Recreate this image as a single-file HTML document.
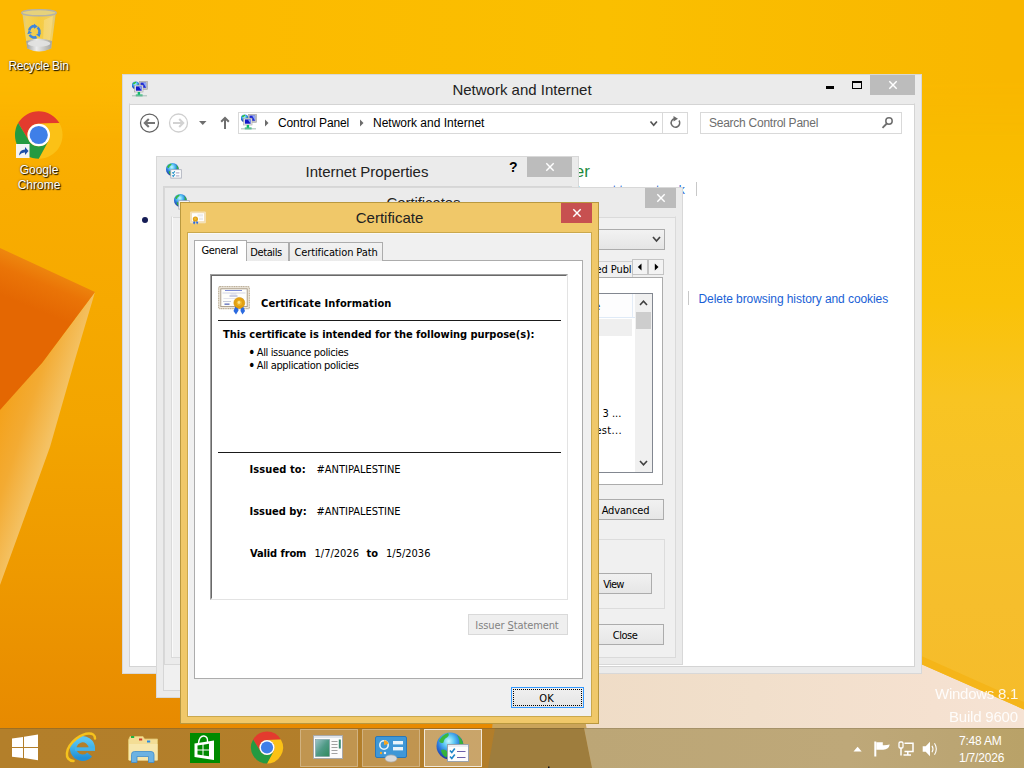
<!DOCTYPE html>
<html>
<head>
<meta charset="utf-8">
<title>Certificate</title>
<style>
*{box-sizing:border-box;margin:0;padding:0}
html,body{width:1024px;height:768px;overflow:hidden}
body{position:relative;font-family:"Liberation Sans",sans-serif;font-size:12px;color:#000;background:#fbb409}
.abs{position:absolute}
.t{position:absolute;white-space:nowrap;line-height:1}
#wall{position:absolute;left:0;top:0;width:1024px;height:768px}
.win{position:absolute;background:#ebebeb;border:1px solid #d8d8d8}
.win .ttl{position:absolute;left:0;right:0;top:5px;height:20px;text-align:center;font-size:15px;line-height:20px;color:#222;white-space:nowrap}
.cls{position:absolute;top:0;height:20px;background:#bcbcbc}
.cls svg{position:absolute;left:50%;top:50%;margin:-4px 0 0 -4px}
.dl{font-size:12px;color:#fff;text-align:center;text-shadow:1px 1px 1px rgba(0,0,0,0.95),0 0 2px rgba(0,0,0,0.55)}
.dj{font-family:"DejaVu Sans Condensed","Liberation Sans",sans-serif;font-size:11px}
.b{font-weight:bold}
.pb{position:absolute;border:1px solid #acacac;background:linear-gradient(#f1f1f1,#e6e6e6);text-align:center;white-space:nowrap;font-family:"DejaVu Sans Condensed","Liberation Sans",sans-serif;font-size:11px}
.btn{position:absolute;border:1px solid #acacac;background:linear-gradient(#f0f0f0,#e5e5e5);font-size:11px;text-align:center}
</style>
</head>
<body>
<svg width="0" height="0" style="position:absolute">
<defs>
<radialGradient id="gl2" cx="0.4" cy="0.35" r="0.7"><stop offset="0" stop-color="#8fdcf8"/><stop offset="0.5" stop-color="#2c82d2"/><stop offset="1" stop-color="#173f8c"/></radialGradient>
<radialGradient id="gl3" cx="0.45" cy="0.32" r="0.7"><stop offset="0" stop-color="#c8f8ff"/><stop offset="0.3" stop-color="#5cc8f4"/><stop offset="0.6" stop-color="#2a78dc"/><stop offset="1" stop-color="#1c2c98"/></radialGradient>
<symbol id="icoNet" viewBox="0 0 16 16">
<circle cx="3.600" cy="4.300" r="3.800" fill="url(#gl3)"/><path d="M0.800 2.500 q1.500-2 3.500-1.800 q0 1.500-1.500 2 q-1 1-2 -0.200z M5.500 3.500 q1.500-0.500 1.800 1 q-0.800 1.500-2 0.500z" fill="#35c030"/>
<rect x="7.500" y="0.300" width="8" height="8" fill="#c4c4c4" stroke="#a2a2a2" stroke-width="0.600"/><rect x="8.600" y="1.600" width="5.500" height="5.200" fill="#1f2ad6"/><path d="M11 1.600 h3.100 v5.200z" fill="#8fa8f4"/>
<rect x="2.500" y="4.200" width="8.500" height="6.800" fill="#ececec" stroke="#a4a4a4" stroke-width="0.600"/><rect x="3.900" y="5.400" width="5.800" height="4.300" fill="#1418c8"/><path d="M6.800 5.400 h2.900 v4.300z" fill="#8aa2f2"/>
<rect x="5.700" y="11" width="2.400" height="2.800" fill="#12b868"/><rect x="3.800" y="13.500" width="6.800" height="1.900" fill="#12b868"/><rect x="0" y="14.200" width="15" height="0.600" fill="#9ab8b0"/><rect x="0" y="15.600" width="15" height="0.500" fill="#b8c4c0"/>
</symbol>
<symbol id="icoInet" viewBox="0 0 16 16">
<circle cx="6.400" cy="6.400" r="6.400" fill="url(#gl3)"/>
<path d="M1.200 3.500 q1.500-2.500 4-3 q1 0.800-0.500 2 q-1.500 0.500-1.800 2.500 q-1.200 0.500-1.700-1.500z M10 1.800 q2 1.200 2.700 3.700 q-1 1-2 0.300 q0.500-1.800-0.700-4z M2.500 8.500 q1.800-0.800 2.800 0.700 q0.500 1.800-0.500 2.800 q-2-1.200-2.300-3.500z" fill="#35b82e" opacity="0.9"/>
<rect x="4.800" y="6.700" width="10.500" height="8.400" fill="#fdfdfd" stroke="#a4a8b6" stroke-width="0.800"/>
<path d="M6.300 9.300 l1 1.100 l1.500-2.200 M6.300 12.300 l1 1.100 l1.500-2.200" fill="none" stroke="#2390c8" stroke-width="1.100"/><path d="M9.800 9.900h3.600M9.800 12.900h3.600" stroke="#8a86b0" stroke-width="0.800"/>
</symbol>
<symbol id="icoCert" viewBox="0 0 16 16">
<rect x="0.300" y="2.900" width="15.400" height="11" rx="0.600" fill="#f3dcae" stroke="#f6e6c4" stroke-width="0.700"/>
<rect x="1.900" y="4.200" width="12.200" height="8" fill="#fefefe"/>
<rect x="7.500" y="5.200" width="5.500" height="2.300" fill="#ebebeb"/><rect x="9" y="8.700" width="4" height="2.300" fill="#ececec"/>
<path d="M4 11.500 l-1 2.500 l1.200 1.500 l1.300-2.200z" fill="#2a6ae0"/><path d="M6.500 11.800 l-0.300 2 l1 1.700 l1.100-2.300z" fill="#2a6ae0"/>
<circle cx="5.400" cy="10" r="2.600" fill="#dfa010"/><circle cx="5.300" cy="9.800" r="1.300" fill="#eeb838"/>
</symbol>
<symbol id="xg" viewBox="0 0 10 10"><path d="M1.300 1.300L8.700 8.700M8.700 1.300L1.300 8.700" stroke="#fff" stroke-width="1.450" fill="none"/></symbol>
</defs></svg>
<!-- WALLPAPER -->
<svg id="wall" viewBox="0 0 1024 768">
<defs>
<linearGradient id="gTop" x1="0" y1="0" x2="1" y2="0"><stop offset="0.08" stop-color="#fdb800"/><stop offset="0.59" stop-color="#fabf00"/><stop offset="0.98" stop-color="#f9b700"/></linearGradient>
<linearGradient id="gL" x1="0" y1="0" x2="0" y2="1"><stop offset="0" stop-color="#fdb800"/><stop offset="0.24" stop-color="#f9ad00"/><stop offset="0.55" stop-color="#f3a500"/><stop offset="0.75" stop-color="#ee9900"/><stop offset="0.96" stop-color="#e78900"/></linearGradient>
<linearGradient id="gR" x1="0" y1="0" x2="0" y2="1"><stop offset="0" stop-color="#f9b800"/><stop offset="0.14" stop-color="#f9bd00"/><stop offset="0.343" stop-color="#fac208"/><stop offset="0.48" stop-color="#f8c422"/><stop offset="0.62" stop-color="#f6c229"/><stop offset="0.767" stop-color="#f6be2c"/><stop offset="1" stop-color="#f5bb2a"/></linearGradient>
<linearGradient id="gCream" x1="0" y1="0" x2="1" y2="0"><stop offset="0" stop-color="#efdcc6"/><stop offset="0.4" stop-color="#f1dfcb"/><stop offset="0.8" stop-color="#f5e1d0"/><stop offset="1" stop-color="#f6e3d4"/></linearGradient>
<linearGradient id="gSliver" gradientUnits="userSpaceOnUse" x1="0" y1="403" x2="56" y2="421.3"><stop offset="0" stop-color="#f4a11a"/><stop offset="0.5" stop-color="#f3ab33"/><stop offset="1" stop-color="#f4c264"/></linearGradient>
<linearGradient id="gFacet" gradientUnits="userSpaceOnUse" x1="60" y1="268" x2="42" y2="312"><stop offset="0" stop-color="#ef8c10"/><stop offset="0.45" stop-color="#ea7407"/><stop offset="1" stop-color="#e46702"/></linearGradient>
<linearGradient id="gFade" x1="0" y1="0" x2="0" y2="1"><stop offset="0.57" stop-color="#fff"/><stop offset="1" stop-color="#000"/></linearGradient>
<mask id="mTop"><rect x="0" y="0" width="1024" height="140" fill="url(#gFade)"/></mask>
</defs>
<rect x="0" y="0" width="1024" height="768" fill="url(#gL)"/>
<rect x="900" y="60" width="124" height="708" fill="url(#gR)"/>
<rect x="0" y="0" width="1024" height="140" fill="url(#gTop)" mask="url(#mTop)"/>
<!-- left facets -->
<polygon points="0,405 42,363 95,292 74,363 50,447 20,530 0,585" fill="url(#gSliver)"/>
<polygon points="0,248 95,292 42,363 0,410" fill="url(#gFacet)"/>
<polygon points="495,700 583,700 592,768 488,768" fill="#caa45a"/>
<!-- cream floor + ribbon edge -->
<polygon points="592,768 575,646 880,646 1024,709.5 1024,768" fill="url(#gCream)"/>
<polygon points="880,637.4 1024,702 1024,709.5 880,646" fill="#f5b519"/>
</svg>

<!-- DESKTOP ICONS -->
<svg class="abs" style="left:0;top:0" width="130" height="200" viewBox="0 0 130 200">
<defs>
<linearGradient id="binG" x1="0" y1="0" x2="1" y2="0"><stop offset="0" stop-color="#cfc79c" stop-opacity="0.9"/><stop offset="0.12" stop-color="#efd878" stop-opacity="0.8"/><stop offset="0.5" stop-color="#f3d45a" stop-opacity="0.7"/><stop offset="0.88" stop-color="#efd67a" stop-opacity="0.8"/><stop offset="1" stop-color="#c9c3a0" stop-opacity="0.9"/></linearGradient>
<linearGradient id="binB" x1="0" y1="0" x2="1" y2="0"><stop offset="0" stop-color="#9b9b98"/><stop offset="0.4" stop-color="#ececec"/><stop offset="1" stop-color="#a5a39a"/></linearGradient>
</defs>
<!-- recycle bin -->
<path d="M22.300 13 L27.200 48.500 Q39 54 51.200 48.500 L55.800 13 Q39 19.500 22.300 13z" fill="url(#binG)"/>
<path d="M44 20 L53 16 L50 40 L43 42z" fill="#fff" opacity="0.180"/>
<path d="M26.200 41 Q39 36 52 41 L51.200 48.500 Q39 54.500 27.200 48.500z" fill="url(#binB)"/>
<ellipse cx="39" cy="43.500" rx="11.300" ry="3.300" fill="#e2e2e0" opacity="0.950"/>
<ellipse cx="39" cy="12.700" rx="17.300" ry="3.100" fill="#e6d27c" stroke="#b4b2a8" stroke-width="1.400"/>
<g fill="none" stroke="#3f86dc" stroke-width="2.600">
<path d="M29.300 30.500 a5 5 0 0 1 5.500 -4.300"/><path d="M37.500 27.500 a5 5 0 0 1 1.200 6.500"/><path d="M36.500 37 a5 5 0 0 1 -6.800 -2.300"/>
</g>
<g fill="#3f86dc"><path d="M34 23.800 l3.800 2.600 l-3.800 2.400z M40.800 33 l-1.200 4 l-3.500-2.500z M27.300 34.300 l1.500-4 l3.300 2.800z"/></g>
<!-- chrome -->
<g transform="translate(38.750 135)">
<path d="M-20.61 -11.90 A23.8 23.8 0 0 1 20.61 -11.90 L0 -11.3 A11.3 11.3 0 0 0 -9.79 5.65z" fill="#e33b2e"/><path d="M20.61 -11.90 A23.8 23.8 0 0 1 0.00 23.80 L9.79 5.65 A11.3 11.3 0 0 0 0 -11.3z" fill="#fbc116"/><path d="M0.00 23.80 A23.8 23.8 0 0 1 -20.61 -11.90 L-9.79 5.65 A11.3 11.3 0 0 0 9.79 5.65z" fill="#249a41"/><circle r="11.3" fill="#fff"/><circle r="9.1" fill="#3f7fe8"/>
</g>
<rect x="16" y="144" width="13.500" height="14" fill="#f4f4f4"/>
<path d="M19 155.500 q0.500-6 6-6 v-2.500 l3.500 4 l-3.500 4 v-2.500 q-3.500-0.300-6 3z" fill="#1d4fa8"/>
</svg>
<div class="t dl" style="left:8.500px;top:60px;width:60px;letter-spacing:-0.3px">Recycle Bin</div>
<div class="t dl" style="left:9px;top:164px;width:60px">Google</div>
<div class="t dl" style="left:9px;top:179px;width:60px">Chrome</div>
<div class="t" style="left:935px;top:686px;font-size:15px;color:#fff;opacity:0.9;letter-spacing:-0.25px">Windows 8.1</div>
<div class="t" style="left:949px;top:709px;font-size:15px;color:#fff;opacity:0.9;letter-spacing:-0.2px">Build 9600</div>

<!-- MAIN WINDOW -->
<div class="win" id="w1" style="left:122px;top:74px;width:800px;height:600px">
  <svg class="abs" style="left:9px;top:6px" width="16" height="16"><use href="#icoNet"/></svg>
  <div class="ttl">Network and Internet</div>
  <div class="abs" style="left:703px;top:11px;width:8px;height:3px;background:#000"></div>
  <div class="abs" style="left:729px;top:6px;width:10px;height:8px;border:1px solid #000;border-top-width:2px"></div>
  <div class="cls" style="left:747px;width:45px"><svg width="10" height="10" style="margin:-5px 0 0 -5px"><use href="#xg"/></svg></div>
  <div class="abs" id="w1c" style="left:6px;top:28px;width:786px;height:564px;background:#fff;border:1px solid #d4d4d4;border-top-color:#ebebeb;overflow:hidden">
    <div class="abs" style="left:0;top:0;width:784px;height:1px;background:#d4d4d4"></div>
    <!-- nav row : coordinates relative to (130,104) -->
    <svg class="abs" style="left:0;top:0" width="784" height="40" viewBox="130 104 784 40">
      <g fill="none" stroke-linecap="butt">
      <circle cx="149.500" cy="123" r="9" stroke="#626262" stroke-width="1.250"/>
      <path d="M155 123 h-9.500 M148.800 119 l-4 4 l4 4" stroke="#747474" stroke-width="2.100"/>
      <circle cx="178.500" cy="123" r="9" stroke="#cfcfcf" stroke-width="1.300"/>
      <path d="M173 123 h9.500 M179.200 119 l4 4 l-4 4" stroke="#d2d2d2" stroke-width="2.100"/>
      <path d="M225 129 v-10.500 M221.200 121.800 l3.800-3.900 l3.800 3.900" stroke="#6e6e6e" stroke-width="2"/>
      </g>
      <polygon points="199,121 206.500,121 202.750,125" fill="#6e6e6e"/>
      <rect x="238.500" y="112.500" width="449" height="21" fill="#fff" stroke="#d9d9d9"/>
      <path d="M662.500 113 v20" stroke="#d9d9d9"/>
      <polygon points="265,119.500 268.500,123 265,126.500" fill="#6b6b6b"/>
      <polygon points="360,119.500 363.500,123 360,126.500" fill="#6b6b6b"/>
      <path d="M650.500 121.500 l3.200 3.800 l3.200 -3.800" fill="none" stroke="#555" stroke-width="1.700"/>
      <path d="M679 120.500 a4.300 4.300 0 1 1 -4.500 -1.800" fill="none" stroke="#6a6a6a" stroke-width="1.500"/>
      <polygon points="673.500,116 678,118.800 673.500,121.500" fill="#6a6a6a"/>
      <rect x="700.500" y="112.500" width="201" height="21" fill="#fff" stroke="#d9d9d9"/>
      <circle cx="889" cy="121" r="3.200" fill="none" stroke="#6e6e6e" stroke-width="1.500"/><path d="M886.800 123.500 l-4.300 4.300" stroke="#6e6e6e" stroke-width="1.800"/>
    </svg>
    <svg class="abs" style="left:111px;top:10px" width="16" height="16"><use href="#icoNet"/></svg>
    <div class="t" style="left:148px;top:13px;font-size:12px;letter-spacing:-0.12px">Control Panel</div>
    <div class="t" style="left:243px;top:13px;font-size:12px">Network and Internet</div>
    <div class="t" style="left:579px;top:13px;font-size:12px;color:#6d6d6d;letter-spacing:-0.25px">Search Control Panel</div>
    <!-- page content -->
    <div class="abs" style="left:12px;top:113px;width:6px;height:6px;border-radius:3px;background:#151c55"></div>
    <div class="t" style="left:160px;top:59px;font-size:17px;color:#1e8a3c;width:300px;text-align:right">Network and Sharing Center</div>
    <div class="t" style="left:263.500px;top:80px;font-size:12px;color:#1a5fd6;width:290px;text-align:right">View network status and tasks &nbsp;&nbsp;&nbsp; Connect to a network</div>
    <div class="abs" style="left:566px;top:78px;width:1px;height:14px;background:#c8c8c8"></div>
    <div class="abs" style="left:558px;top:187px;width:1px;height:14px;background:#c8c8c8"></div>
    <div class="t" style="left:568.500px;top:189px;font-size:12px;color:#1a5fd6;letter-spacing:-0.07px">Delete browsing history and cookies</div>
  </div>
</div>

<!-- INTERNET PROPERTIES -->
<div class="win" id="w2" style="left:156px;top:156px;width:423px;height:542px">
  <svg class="abs" style="left:9px;top:6px" width="16" height="16"><use href="#icoInet"/></svg>
  <div class="ttl" style="letter-spacing:-0.03px;padding-right:1px">Internet Properties</div>
  <div class="t b" style="left:352px;top:3px;font-size:14px;color:#000">?</div>
  <div class="cls" style="left:370px;width:45px"><svg width="10" height="10" style="margin:-5px 0 0 -5px"><use href="#xg"/></svg></div>
  <div class="abs" style="left:6px;top:29px;width:409px;height:505px;background:#f0f0f0;border:1px solid #d6d6d6"></div>
</div>

<!-- CERTIFICATES -->
<div class="win" id="w3" style="left:164px;top:187px;width:519px;height:478px">
  <svg class="abs" style="left:9px;top:6px" width="16" height="16"><use href="#icoInet"/></svg>
  <div class="ttl" style="letter-spacing:-0.1px">Certificates</div>
  <div class="cls" style="left:480px;width:31px"><svg width="10" height="10" style="margin:-5px 0 0 -5px"><use href="#xg"/></svg></div>
  <div class="abs dj" id="w3c" style="left:6px;top:28px;width:505px;height:442px;background:#f0f0f0;border:1px solid #dadada;border-top-color:#ebebeb;overflow:hidden">
    <div class="abs" style="left:0;top:0;width:503px;height:1px;background:#dadada"></div>
    <div class="abs" style="left:0;top:0;width:1px;height:440px;background:#fafafa"></div>
    <!-- combo -->
    <div class="abs" style="left:120px;top:12px;width:373px;height:21px;border:1px solid #acacac;background:linear-gradient(#f2f2f2,#e5e5e5)">
      <svg class="abs" style="right:3px;top:6px" width="9" height="7"><path d="M1 1 l3.500 4 l3.500 -4" fill="none" stroke="#444" stroke-width="1.700"/></svg>
    </div>
    <!-- tabs -->
    <div class="abs" style="left:380px;top:44px;width:81px;height:18px;border:1px solid #d0d0d0;border-bottom:none;background:#f0f0f0;overflow:hidden"></div>
    <div class="t" style="left:387px;top:47px;width:72.500px;overflow:hidden;font-size:11px;letter-spacing:-0.1px;text-align:right;direction:rtl"><span style="direction:ltr;unicode-bidi:bidi-override">Trusted Publ</span></div>
    <div class="abs" style="left:460px;top:42px;width:16px;height:16px;border:1px solid #c4c4c4;background:#f3f3f3"><svg class="abs" style="left:4px;top:3px" width="6" height="8"><polygon points="4.500,0.500 4.500,7.500 0.800,4" fill="#000"/></svg></div>
    <div class="abs" style="left:476px;top:42px;width:16px;height:16px;border:1px solid #c4c4c4;background:#f3f3f3"><svg class="abs" style="left:5px;top:3px" width="6" height="8"><polygon points="0.800,0.500 0.800,7.500 4.500,4" fill="#000"/></svg></div>
    <!-- tab pane -->
    <div class="abs" style="left:10px;top:60px;width:481px;height:208px;background:#fff;border:1px solid #acacac"></div>
    <!-- list -->
    <div class="abs" style="left:22px;top:76px;width:459px;height:180px;background:#fff;border:1px solid #828790;overflow:hidden">
      <div class="abs" style="left:0;top:0;width:440px;height:24px;background:#fdfdfe;border-bottom:1px solid #dfeaf7"></div>
      <div class="abs" style="left:437px;top:0;width:1px;height:24px;background:#e3ecf7"></div>
      <div class="t" style="left:332.500px;top:7px;font-size:11px;width:70px;text-align:right;color:#1e3287;letter-spacing:-0.3px">Expiration Date</div>
      <div class="abs" style="left:0;top:25px;width:437px;height:17px;background:#efefef"></div>
      <div class="t" style="left:407.500px;top:114px;font-size:11px">3 ...</div>
      <div class="t" style="left:404px;top:131px;font-size:11px;width:40px;letter-spacing:0.3px"><span style="margin-left:-23px">MyTest...</span></div>
      <div class="abs" style="left:440px;top:0;width:17px;height:178px;background:#f0f0f0">
        <svg class="abs" style="left:4px;top:6px" width="9" height="6"><path d="M1 5 l3.500 -3.800 l3.500 3.800" fill="none" stroke="#404040" stroke-width="1.600"/></svg>
        <div class="abs" style="left:1px;top:18px;width:15px;height:17px;background:#cdcdcd"></div>
        <svg class="abs" style="left:4px;top:166px" width="9" height="6"><path d="M1 1 l3.500 3.800 l3.500 -3.800" fill="none" stroke="#404040" stroke-width="1.600"/></svg>
      </div>
    </div>
    <div class="pb" style="left:417px;top:282px;width:75px;height:21px;line-height:21px;letter-spacing:-0.15px;padding-right:2px">Advanced</div>
    <div class="abs" style="left:10px;top:322px;width:483px;height:70px;border:1px solid #dcdcdc"></div>
    <div class="pb" style="left:405px;top:356px;width:75px;height:21px;line-height:19px;padding-top:1px;letter-spacing:-0.8px;padding-right:2px">View</div>
    <div class="pb" style="left:417px;top:407px;width:75px;height:21px;line-height:21px;letter-spacing:-0.5px;padding-right:3px">Close</div>
  </div>
</div>

<!-- CERTIFICATE (active) -->
<div class="win" id="w4" style="left:180px;top:202px;width:419px;height:522px;background:#f0c869;border-color:#b9983f">
  <svg class="abs" style="left:9px;top:6px" width="16" height="16"><use href="#icoCert"/></svg>
  <div class="ttl">Certificate</div>
  <div class="cls" style="left:380px;width:31px;background:#c75050"><svg width="10" height="10" style="margin:-5px 0 0 -5px"><use href="#xg"/></svg></div>
  <div class="abs" style="left:6px;top:29px;width:405px;height:485px;background:#caa84d"></div>
  <div class="abs dj" id="w4c" style="left:7px;top:29px;width:403px;height:484px;background:#f0f0f0">
    <div class="abs" style="left:0;top:0;width:403px;height:1px;background:#caa84d"></div><div class="abs" style="left:0;top:1px;width:403px;height:1px;background:#f8f8f8"></div><div class="abs" style="left:0;top:1px;width:1px;height:483px;background:#f8f8f8"></div>
    <!-- tab pane -->
    <div class="abs" style="left:6px;top:28px;width:389px;height:419px;background:#fff;border:1px solid #acacac"></div>
    <!-- tabs -->
    <div class="abs" style="left:58px;top:10px;width:43px;height:19px;border:1px solid #acacac;border-bottom:none;border-left:none;background:linear-gradient(#f2f2f2,#ebebeb)"></div>
    <div class="abs" style="left:101px;top:10px;width:94px;height:19px;border:1px solid #acacac;border-bottom:none;background:linear-gradient(#f2f2f2,#ebebeb)"></div>
    <div class="abs" style="left:6px;top:8px;width:53px;height:21px;border:1px solid #acacac;border-bottom:none;background:#fff"></div>
    <div class="t" style="left:13.500px;top:13px;letter-spacing:-0.37px">General</div>
    <div class="t" style="left:62.200px;top:15px;letter-spacing:-0.37px">Details</div>
    <div class="t" style="left:106.500px;top:15px;letter-spacing:-0.12px">Certification Path</div>
    <!-- sunken box -->
    <div class="abs" style="left:22px;top:42px;width:358px;height:326px;background:#fff;border:1px solid #a0a0a0;border-right-color:#e3e3e3;border-bottom-color:#e3e3e3"></div>
    <div class="abs" style="left:23px;top:43px;width:356px;height:324px;border:1px solid #696969;border-right-color:#fff;border-bottom-color:#fff"></div>
    <svg class="abs" style="left:30px;top:53px" width="32" height="32" viewBox="0 0 32 32">
      <rect x="0.700" y="1.700" width="30.600" height="22" rx="1.200" fill="#f3ede2" stroke="#bdb09a" stroke-width="1.200" stroke-dasharray="1.300 0.450"/>
      <rect x="2.800" y="3.800" width="26.400" height="17.800" fill="#fefefb" stroke="#a39480" stroke-width="0.900"/>
      <path d="M7 5.500h17" stroke="#6f7fd0" stroke-width="0.900"/><path d="M4.500 8h23M12.500 9h6" stroke="#c3c6dc" stroke-width="0.700"/><path d="M11.500 11h8" stroke="#8f96c8" stroke-width="0.900"/><path d="M5.500 13.500h20" stroke="#d0d2e2" stroke-width="0.600"/><path d="M5 16.500h8" stroke="#aeb2cc" stroke-width="0.700"/><rect x="6.500" y="18.500" width="5" height="1.300" fill="#5a6ab8"/>
      <path d="M17.500 21 l-2 5 l2.500 3.500 l2.500-4 l-0.500-3.500z" fill="#2a6ae0"/><path d="M23 22 l-0.500 4 l2 3.500 l2.500-3.500 l-2-5z" fill="#2a6ae0"/>
      <circle cx="21.300" cy="17.900" r="5.500" fill="#e5a30f" stroke="#cf8d08" stroke-width="0.500"/><circle cx="21.300" cy="17.900" r="3.300" fill="#f0b526" stroke="#d79412" stroke-width="0.600"/><circle cx="21" cy="17.500" r="1.400" fill="#fbe28a"/>
    </svg>
    <div class="t b" style="left:73px;top:66px;letter-spacing:0.12px">Certificate Information</div>
    <div class="abs" style="left:30px;top:88px;width:343px;height:1px;background:#1a1a1a"></div>
    <div class="t b" style="left:35px;top:97px;letter-spacing:-0.04px">This certificate is intended for the following purpose(s):</div>
    <div class="t" style="left:59.900px;top:115px;letter-spacing:-0.36px"><span style="font-size:14px;line-height:0;position:relative;top:1px;letter-spacing:0;margin-right:-1.400px">•</span> All issuance policies</div>
    <div class="t" style="left:59.900px;top:128px;letter-spacing:-0.36px"><span style="font-size:14px;line-height:0;position:relative;top:1px;letter-spacing:0;margin-right:-1.400px">•</span> All application policies</div>
    <div class="abs" style="left:30px;top:220px;width:343px;height:1px;background:#1a1a1a"></div>
    <div class="t b" style="left:61.500px;top:232px;letter-spacing:0.1px">Issued to:</div>
    <div class="t" style="left:128.500px;top:232px">#ANTIPALESTINE</div>
    <div class="t b" style="left:61.500px;top:274px">Issued by:</div>
    <div class="t" style="left:128.500px;top:274px">#ANTIPALESTINE</div>
    <div class="t b" style="left:62px;top:316px;letter-spacing:-0.1px">Valid from</div>
    <div class="t" style="left:126.500px;top:316px">1/7/2026</div>
    <div class="t b" style="left:178.500px;top:316px">to</div>
    <div class="t" style="left:198px;top:316px">1/5/2036</div>
    <!-- issuer statement (disabled) -->
    <div class="abs" style="left:280px;top:382px;width:100px;height:21px;border:1px solid #d9d9d9;background:#efefef;color:#838383;text-align:center;line-height:19px;padding:1px 2px 0 0;letter-spacing:-0.1px">Issuer <span style="text-decoration:underline">S</span>tatement</div>
    <!-- OK -->
    <div class="abs" style="left:323px;top:455px;width:73px;height:21px;border:1px solid #3399ff;background:linear-gradient(#f0f0f0,#e5e5e5);text-align:center;line-height:19px;padding:1px 2px 0 0">OK
      <div class="abs" style="left:1px;top:1px;right:1px;bottom:1px;border:1px dotted #000"></div>
    </div>
  </div>
</div>

<!-- TASKBAR -->
<div class="abs" id="tb" style="left:0;top:728px;width:1024px;height:40px;overflow:hidden;background:#b17d2a">
<svg class="abs" style="left:0;top:0" width="1024" height="40" viewBox="0 728 1024 40">
<defs>
<linearGradient id="tbL" x1="0" y1="0" x2="1" y2="0"><stop offset="0" stop-color="#b37f2a"/><stop offset="1" stop-color="#b17c2a"/></linearGradient>
<linearGradient id="tbR" x1="0" y1="0" x2="1" y2="0"><stop offset="0" stop-color="#bca676"/><stop offset="0.6" stop-color="#bea879"/><stop offset="1" stop-color="#b9a36f"/></linearGradient>
<linearGradient id="b1g" x1="0" y1="0" x2="1" y2="1"><stop offset="0" stop-color="#9ec4c8"/><stop offset="0.5" stop-color="#4f9a86"/><stop offset="1" stop-color="#2f8a5a"/></linearGradient>
<radialGradient id="ieg" cx="0.5" cy="0.45" r="0.6"><stop offset="0" stop-color="#8fe0fb"/><stop offset="0.6" stop-color="#3fb2ea"/><stop offset="1" stop-color="#1d86cf"/></radialGradient>
<linearGradient id="ieg2" x1="0" y1="0" x2="0" y2="1"><stop offset="0" stop-color="#5cc6f3"/><stop offset="0.5" stop-color="#3db0e8"/><stop offset="1" stop-color="#2490d6"/></linearGradient>
<radialGradient id="globe" cx="0.4" cy="0.35" r="0.7"><stop offset="0" stop-color="#7fd4f5"/><stop offset="0.5" stop-color="#2a7fd0"/><stop offset="1" stop-color="#143f8a"/></radialGradient>
</defs>
<rect x="0" y="728" width="1024" height="40" fill="url(#tbL)"/>
<polygon points="495,728 584,728 592,768 488,768" fill="#9e7d3d"/>
<polygon points="584,728 1024,728 1024,768 592,768" fill="url(#tbR)"/>
<polygon points="960,728 1024,728 1024,768 1000,768" fill="#b9a262" opacity="0.5"/>
<rect x="0" y="728" width="1024" height="1" fill="#000" opacity="0.12"/>
<!-- start -->
<g fill="#fff">
<polygon points="12,738.4 23,736.9 23,746.9 12,746.9"/>
<polygon points="24,736.75 38,734.6 38,746.9 24,746.9"/>
<polygon points="12,748 23,748 23,758 12,756.75"/>
<polygon points="24,748 38,748 38,760.25 24,758.1"/>
</g>
<!-- IE -->
<g>
<path d="M91.8 748.5 A9.3 9.3 0 1 0 89.62 754.48" fill="none" stroke="url(#ieg2)" stroke-width="6.4"/>
<rect x="75" y="747.3" width="20" height="3.6" fill="#45b4ea"/>
<path d="M73.5 761 C64 760.5 64.500 748 76.500 738.5 C85 732 95 731.5 95 738.500" fill="none" stroke="#f6c21c" stroke-width="2.500" stroke-linecap="round"/>
</g>
<!-- Explorer -->
<g>
<path d="M128.5 740 l1.5-3.5 h13 l1.5 2.5 h13 v21 h-29z" fill="#f3dd95" stroke="#e2c66f" stroke-width="0.8"/>
<rect x="129" y="744" width="28.5" height="16.5" fill="#f7e7ad"/>
<rect x="131" y="736" width="3.2" height="2" fill="#1fb340"/><rect x="139" y="738.5" width="3.2" height="2" fill="#d03a2a"/><rect x="147" y="740.5" width="3.2" height="2" fill="#2a8be0"/>
<path d="M131.5 762.5 v-8 q0-3 3-3 h16.5 q3 0 3 3 v8 h-5.5 v-6 h-11.5 v6z" fill="#6cb2e2" stroke="#3f8ccb" stroke-width="0.8"/>
</g>
<!-- Store -->
<g>
<rect x="190" y="733" width="30" height="30" fill="#008a00"/>
<path d="M194.5 743.5 l19.5-3 v19.5 l-19.5-3z" fill="#fff"/>
<path d="M198.5 743 q1-7.5 5.5-7 q4 0.5 3.5 6" fill="none" stroke="#fff" stroke-width="1.4"/>
<path d="M197.5 745.6 l5-0.8 v4.6 h-5z M203.5 744.7 l5.5-0.9 v5.6 h-5.5z M197.5 750.5 h5 v4.8 l-5-0.7z M203.5 750.5 h5.5 v5.8 l-5.5-0.8z" fill="#008a00"/>
</g>
<!-- Chrome -->
<g transform="translate(267 747.5)">
<path d="M-13.86 -8.00 A16 16 0 0 1 13.86 -8.00 L0 -7.6 A7.6 7.6 0 0 0 -6.58 3.80z" fill="#e33b2e"/><path d="M13.86 -8.00 A16 16 0 0 1 0.00 16.00 L6.58 3.80 A7.6 7.6 0 0 0 0 -7.6z" fill="#fbc116"/><path d="M0.00 16.00 A16 16 0 0 1 -13.86 -8.00 L-6.58 3.80 A7.6 7.6 0 0 0 6.58 3.80z" fill="#249a41"/><circle r="7.6" fill="#fff"/><circle r="6.1" fill="#3f7fe8"/>
</g>
<!-- task buttons -->
<g>
<rect x="300.5" y="729.5" width="57" height="37" fill="#fff" fill-opacity="0.18" stroke="#fff" stroke-opacity="0.35"/>
<rect x="362.5" y="729.5" width="57" height="37" fill="#fff" fill-opacity="0.18" stroke="#fff" stroke-opacity="0.35"/>
<rect x="424.5" y="729.5" width="57" height="37" fill="#fff" fill-opacity="0.3" stroke="#fff" stroke-opacity="0.8"/>
</g>
<!-- btn1 icon: window -->
<g>
<rect x="313.500" y="735.500" width="29" height="23" fill="#fbfbfb" stroke="#a9a9a9"/>
<rect x="314" y="736" width="28" height="2" fill="#dfe5ec"/>
<rect x="315.500" y="739.500" width="14" height="17" fill="url(#b1g)" stroke="#7a9aa0" stroke-width="0.600"/>
<path d="M331.500 741.500h6M331.500 744.500h6M331.500 747.500h6M331.500 750.500h6M331.500 753.500h6" stroke="#a2a2a2" stroke-width="1"/>
<rect x="338.800" y="739.500" width="2" height="9" fill="#3a8a70"/>
</g>
<!-- btn2 icon: control panel -->
<g>
<rect x="375.5" y="736.5" width="31" height="21" rx="1.5" fill="#3f97d6" stroke="#2a78b8"/>
<circle cx="384" cy="745" r="4.2" fill="none" stroke="#e9f4fb" stroke-width="1.6"/>
<path d="M384 745 L384 740.3 A4.7 4.7 0 0 1 388.5 744z" fill="#f5a623"/>
<rect x="393" y="741" width="10" height="3.4" fill="#e9f4fb"/><rect x="393" y="747" width="10" height="3.4" fill="#e9f4fb"/>
<circle cx="381" cy="753" r="1.2" fill="#f5a623"/><circle cx="385" cy="753" r="1.2" fill="#e9f4fb"/>
<ellipse cx="391" cy="758.5" rx="6" ry="3.6" fill="#d9d9d9" stroke="#a8a8a8" stroke-width="0.7"/>
</g>
<!-- btn3 icon: globe+checklist -->
<g>
<circle cx="450" cy="746" r="13.500" fill="url(#gl3)"/>
<path d="M439 741 q3-6 9-8 q2 2-1 4.500 q-3 1-3.500 5 q-3 1.500-4.500-1.500z M457 735 q5 3 6.300 9 q-2 2-4 0.500 q1-4-2.300-9.500z M441 750 q4-1.500 6 1.500 q1 4-1 6 q-4.500-2.500-5-7.500z" fill="#35b82e" opacity="0.92"/>
<rect x="447.500" y="744.500" width="21" height="17" fill="#fdfdfd" stroke="#9aa3ad"/>
<rect x="448" y="745" width="20" height="2" fill="#e9edf2"/>
<path d="M450 750.500 l1.800 2 l3-4 M450 756.500 l1.800 2 l3-4" fill="none" stroke="#1f86c8" stroke-width="1.600"/>
<path d="M457 751.500h8.500M457 757.500h8.500" stroke="#6a5fa8" stroke-width="1.200"/>
</g>
<rect x="548" y="766.500" width="1.500" height="1.500" fill="#111"/>
<!-- tray -->
<g>
<polygon points="853.500,751.500 857.600,746.800 861.700,751.500" fill="#fff"/>
<rect x="874.300" y="741.500" width="2" height="15" fill="#fff"/>
<path d="M876.300 742.300 h6.500 v3 q3.500 0.200 6.900 -0.800 q-0.800 5 -6.500 5.300 h-6.900z" fill="#fff"/>
<rect x="899" y="742" width="4" height="6" rx="1.200" fill="none" stroke="#fff" stroke-width="1.300"/><path d="M901 748 v7.500" stroke="#fff" stroke-width="1.500"/>
<path d="M904.500 743.200 h8.500 v8.400 h-8.500" fill="none" stroke="#fff" stroke-width="1.500"/>
<path d="M903.500 755 h7.500 M907.800 751.600 v3" stroke="#fff" stroke-width="1.500" fill="none"/>
<path d="M922.700 746.200 h3 l4.300-4.500 v14.600 l-4.300-4.500 h-3z" fill="#fff"/>
<path d="M932 745.800 q2 3.200 0 6.400 M934.500 743.300 q3.600 5.700 0 11.400" stroke="#fff" stroke-width="1.100" fill="none"/>
</g>
</svg>
<div class="t" style="left:959px;top:7px;font-size:12px;color:#fff;letter-spacing:-0.2px">7:48 AM</div>
<div class="t" style="left:959px;top:24px;font-size:12px;color:#fff;letter-spacing:-0.2px">1/7/2026</div>
</div>
</body>
</html>
